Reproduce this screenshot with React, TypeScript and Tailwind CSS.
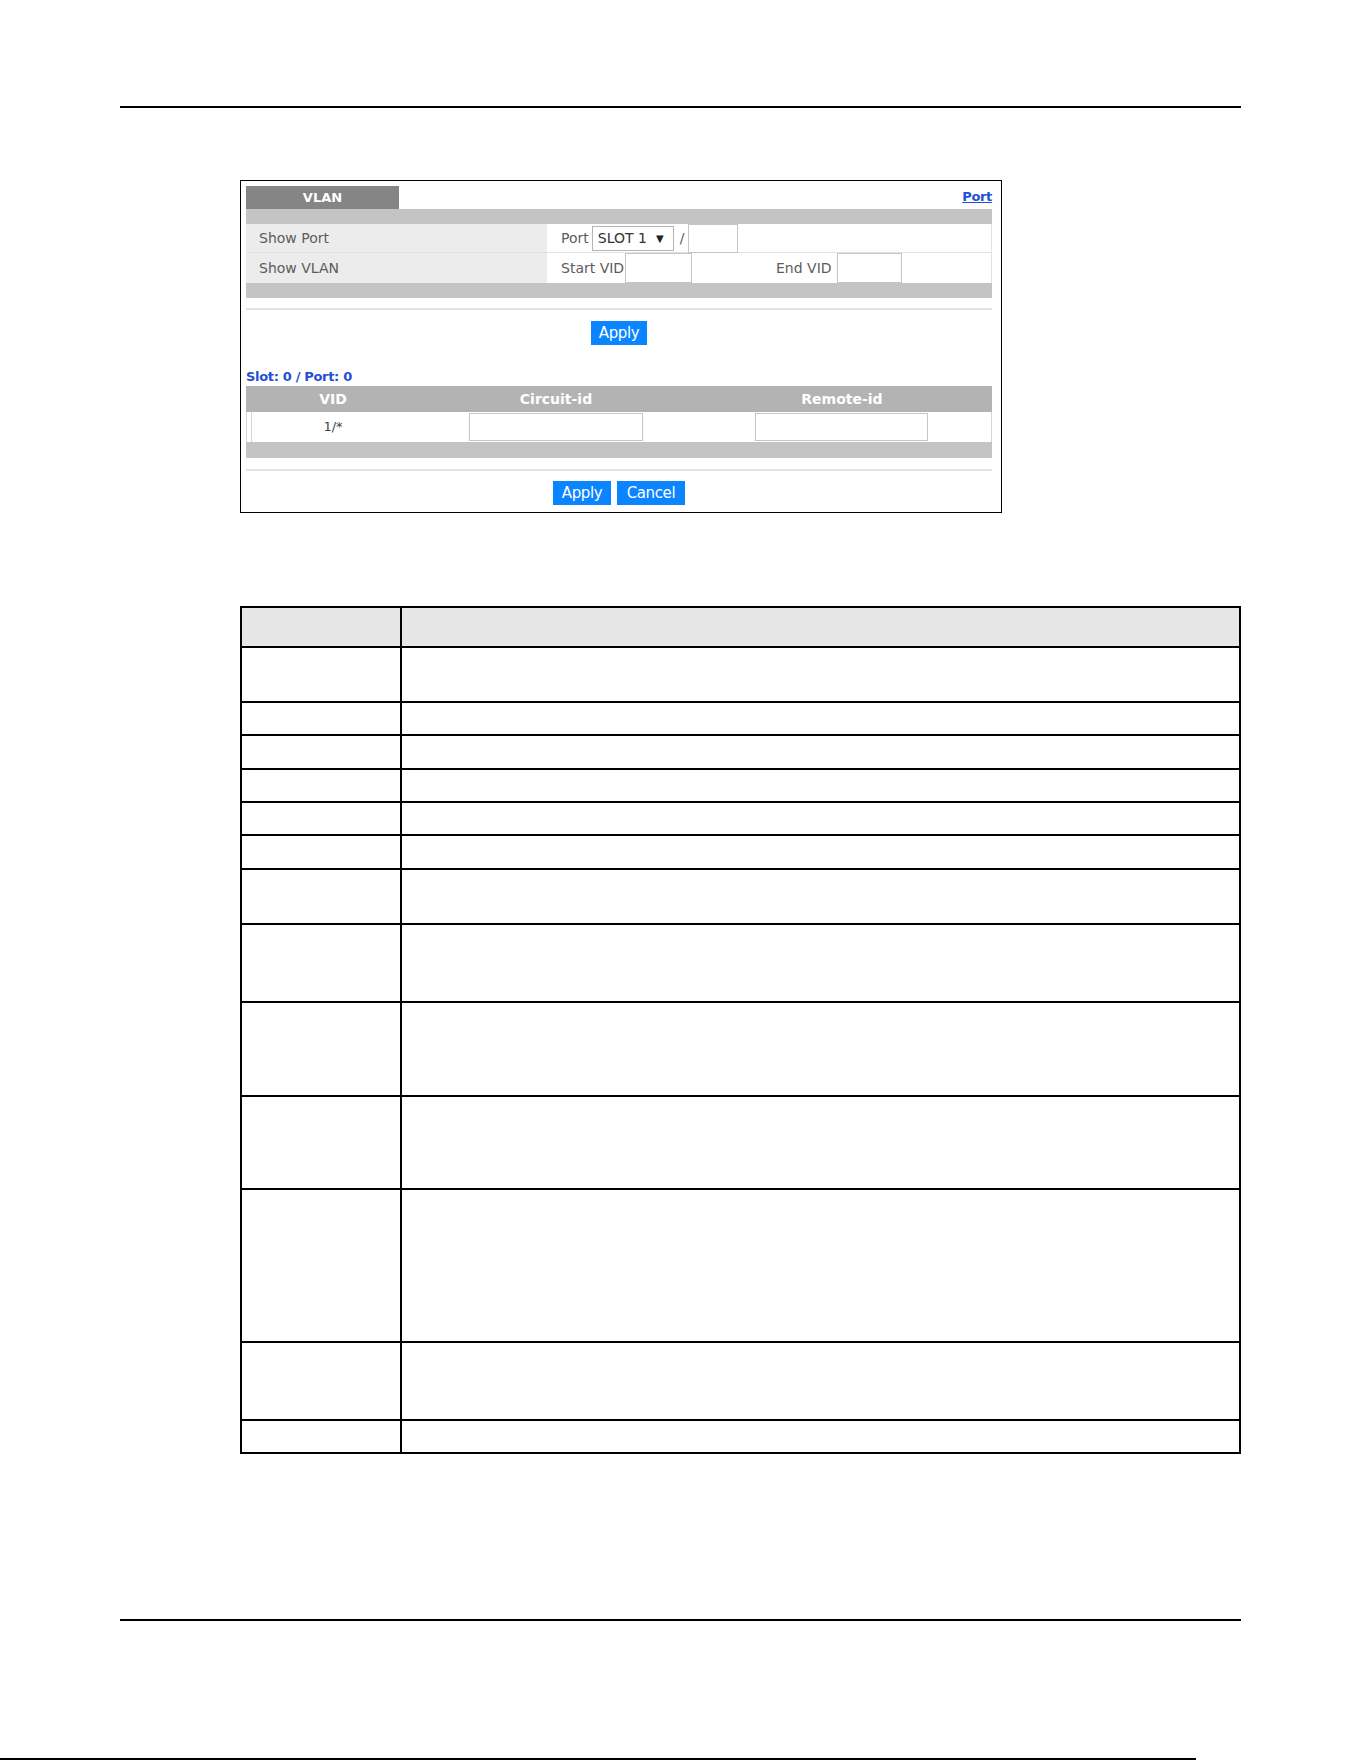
import React from 'react';

const uiFont = { fontFamily: '"DejaVu Sans", "Liberation Sans", sans-serif' };

// row heights of the field description table (each includes its top rule)
const descRows = [55, 33, 34, 33, 33, 34, 55, 78, 94, 93, 153, 78, 33];

function GrayBar({ h }: { h: string }) {
  return <div className={`w-full bg-[#c4c4c4] ${h}`} />;
}

function BlueButton({ label, w }: { label: string; w: string }) {
  return (
    <button className={`h-[24px] ${w} bg-[#0a84ff] text-white text-[15px] leading-none tracking-tight`}>
      {label}
    </button>
  );
}

function VlanPanel() {
  return (
    <div
      className="ml-[240px] mt-[72px] w-[762px] h-[333px] border border-black pl-[5px] pr-[9px] pt-[5px] flex flex-col"
      style={uiFont}
    >
      {/* tab strip */}
      <div className="flex items-end justify-between h-[23px]">
        <div className="w-[153px] h-[23px] bg-[#858585] flex items-center justify-center text-white font-bold text-[13px]">
          VLAN
        </div>
        <a className="text-[#1f4fd6] font-bold text-[13px] underline mb-[3px] tracking-tight">Port</a>
      </div>
      <GrayBar h="h-[15px]" />

      {/* filter rows */}
      <div className="flex h-[29px] border-b border-[#e2e2e2] border-r">
        <div className="w-[301px] bg-[#ececec] pl-[13px] flex items-center text-[14px] text-[#5c5c5c]">
          Show Port
        </div>
        <div className="flex items-center pl-[14px] text-[14px] text-[#5c5c5c]">
          <span>Port</span>
          <div className="ml-[3px] w-[82px] h-[25px] border border-[#b5b5b5] flex items-center pl-[5px] text-[#333] text-[14px]">
            SLOT 1<span className="ml-[9px] text-[10px] text-[#222]">▼</span>
          </div>
          <span className="ml-[6px]">/</span>
          <div className="ml-[4px] w-[50px] h-[29px] border border-[#c6c6c6] bg-white" />
        </div>
      </div>
      <div className="flex h-[30px] border-r border-[#e2e2e2]">
        <div className="w-[301px] bg-[#ececec] pl-[13px] flex items-center text-[14px] text-[#5c5c5c]">
          Show VLAN
        </div>
        <div className="flex items-center pl-[14px] text-[14px] text-[#5c5c5c] whitespace-nowrap">
          <span className="w-[64px]">Start VID</span>
          <div className="w-[67px] h-[30px] border border-[#c6c6c6] bg-white" />
          <span className="ml-[84px] w-[61px]">End VID</span>
          <div className="w-[65px] h-[30px] border border-[#c6c6c6] bg-white" />
        </div>
      </div>
      <GrayBar h="h-[15px]" />

      <div className="mt-[10px] h-[2px] bg-[#e3e3e3]" />
      <div className="mt-[11px] flex justify-center">
        <BlueButton label="Apply" w="w-[56px]" />
      </div>

      {/* per-port VLAN option table */}
      <div className="mt-[24px] h-[16px] flex items-center text-[#1f4fd6] font-bold text-[13px] tracking-tight">
        Slot: 0 / Port: 0
      </div>
      <div className="mt-[1px] h-[26px] bg-[#b3b3b3] flex items-center text-white font-bold text-[14px]">
        <div className="w-[174px] text-center">VID</div>
        <div className="w-[272px] text-center">Circuit-id</div>
        <div className="w-[300px] text-center">Remote-id</div>
      </div>
      <div className="h-[30px] flex items-center border-r border-[#d6d6d6]">
        <div className="w-[6px] h-full border-l border-r border-[#d6d6d6]" />
        <div className="w-[217px] h-full flex items-center">
          <span className="w-[162px] text-center text-[13px] text-[#444]">1/*</span>
        </div>
        <div className="w-[174px] h-[28px] border border-[#c6c6c6]" />
        <div className="w-[112px]" />
        <div className="w-[173px] h-[28px] border border-[#c6c6c6]" />
      </div>
      <GrayBar h="h-[16px]" />

      <div className="mt-[11px] h-[2px] bg-[#e3e3e3]" />
      <div className="mt-[10px] flex justify-center gap-[6px]">
        <BlueButton label="Apply" w="w-[58px]" />
        <BlueButton label="Cancel" w="w-[68px]" />
      </div>
    </div>
  );
}

function DescriptionTable() {
  return (
    <div className="ml-[240px] mt-[93px] w-[1001px] border-2 border-black">
      <div className="flex h-[38px] bg-[#e6e6e6]">
        <div className="w-[160px] border-r-2 border-black" />
        <div className="flex-1" />
      </div>
      {descRows.map((h, i) => (
        <div key={i} className="flex border-t-2 border-black" style={{ height: h }}>
          <div className="w-[160px] border-r-2 border-black" />
          <div className="flex-1" />
        </div>
      ))}
    </div>
  );
}

export default function App() {
  return (
    <div className="relative w-[1361px] h-[1761px] bg-white overflow-hidden">
      <div className="h-[106px]" />
      <div className="ml-[120px] w-[1121px] h-[2px] bg-black" />
      <VlanPanel />
      <DescriptionTable />
      <div className="ml-[120px] mt-[165px] w-[1121px] h-[2px] bg-black" />
      <div className="mt-[137px] w-[1196px] h-[2px] bg-black" />
    </div>
  );
}
